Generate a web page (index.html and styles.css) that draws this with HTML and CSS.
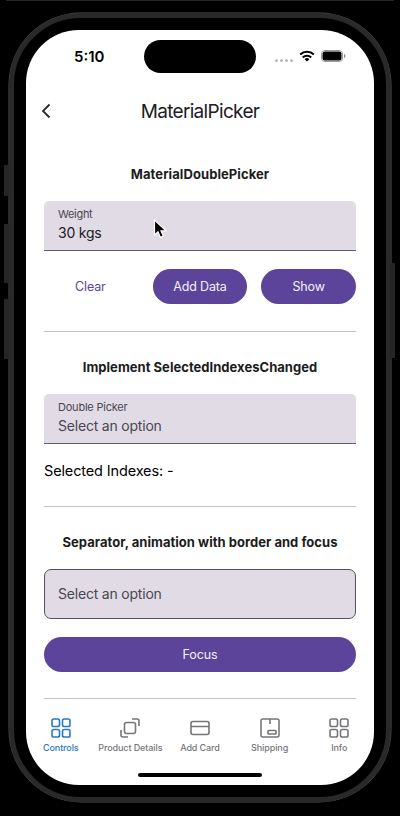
FILE: index.html
```html
<!DOCTYPE html>
<html lang="en">
<head>
<meta charset="utf-8">
<title>MaterialPicker</title>
<link rel="stylesheet" href="styles.css">
</head>
<body>
<div class="phone">
  <span class="side side-action"></span>
  <span class="side side-up"></span>
  <span class="side side-down"></span>
  <span class="side side-power"></span>
  <div class="screen">
    <header class="status">
      <span class="time">5:10</span>
      <span class="island"></span>
      <span class="indicators">
        <span class="signal"><i></i><i></i><i></i><i></i></span>
        <svg class="wifi" width="16" height="12" viewBox="0 0 16 12" fill="none" stroke="#000" stroke-width="2.1"><path d="M1.2 4.500a9.700 9.700 0 0 1 13.600 0M3.800 7.400a6 6 0 0 1 8.400 0"/><path d="M8 11.600 5.600 9.200a3.500 3.500 0 0 1 4.800 0z" fill="#000" stroke="none"/></svg>
        <svg class="battery" width="25" height="12" viewBox="0 0 25 12"><rect x=".5" y=".5" width="21" height="11" rx="3.5" fill="none" stroke="#999"/><rect x="1.500" y="1.500" width="19" height="9" rx="2.500" fill="#000"/><path d="M23 4v4q1.500-.7 1.500-2T23 4" fill="#888"/></svg>
      </span>
    </header>
    <nav class="navbar">
      <svg class="back" width="10" height="16" viewBox="0 0 10 16" fill="none" stroke="#29292e" stroke-width="1.8"><path d="M8.500 1.500 2 8l6.500 6.500"/></svg>
      <h1 class="title">MaterialPicker</h1>
    </nav>
    <main class="content">
      <h2 class="heading h-double">MaterialDoublePicker</h2>
      <div class="field">
        <span class="label l-weight">Weight</span>
        <span class="value">30 kgs</span>
        <svg class="cursor" width="14" height="20" viewBox="0 0 14 20"><path d="M1.500 1v15l3.500-3.200 2.400 5.600 2.900-1.300-2.300-5.300H13z" fill="#000" stroke="#fff" stroke-width="1.200"/></svg>
      </div>
      <div class="actions">
        <button class="btn btn-text">Clear</button>
        <button class="btn">Add Data</button>
        <button class="btn">Show</button>
      </div>
      <hr class="rule">
      <h2 class="heading h-implement">Implement SelectedIndexesChanged</h2>
      <div class="field">
        <span class="label">Double Picker</span>
        <span class="value placeholder">Select an option</span>
      </div>
      <p class="indexes">Selected Indexes: -</p>
      <hr class="rule">
      <h2 class="heading h-separator">Separator, animation with border and focus</h2>
      <div class="field outlined">
        <span class="value placeholder">Select an option</span>
      </div>
      <button class="btn btn-wide">Focus</button>
      <hr class="rule rule-last">
    </main>
    <footer class="tabs">
      <div class="tab active">
        <svg viewBox="0 0 22 22"><rect x="2" y="2" width="7.500" height="7.500" rx="1.800"/><rect x="12.500" y="2" width="7.500" height="7.500" rx="1.800"/><rect x="2" y="12.500" width="7.500" height="7.500" rx="1.800"/><rect x="12.500" y="12.500" width="7.500" height="7.500" rx="1.800"/></svg>
        <span>Controls</span>
      </div>
      <div class="tab">
        <svg viewBox="0 0 22 22"><rect x="5.500" y="5.500" width="11" height="11" rx="2"/><path d="M13 2h5q2 0 2 2v5M2 13v5q0 2 2 2h5"/></svg>
        <span>Product Details</span>
      </div>
      <div class="tab">
        <svg viewBox="0 0 22 22"><rect x="2" y="4.500" width="18" height="13" rx="2"/><path d="M2 9.500h18"/></svg>
        <span>Add Card</span>
      </div>
      <div class="tab">
        <svg viewBox="0 0 22 22"><rect x="2" y="2" width="18" height="18" rx="2"/><path d="M11 2v5"/><rect x="9" y="13.500" width="8" height="3.500" rx=".5"/></svg>
        <span>Shipping</span>
      </div>
      <div class="tab">
        <svg viewBox="0 0 22 22"><rect x="2" y="2" width="7.500" height="7.500" rx="1.800"/><rect x="12.500" y="2" width="7.500" height="7.500" rx="1.800"/><rect x="2" y="12.500" width="7.500" height="7.500" rx="1.800"/><rect x="12.500" y="12.500" width="7.500" height="7.500" rx="1.800"/></svg>
        <span>Info</span>
      </div>
    </footer>
    <div class="home"></div>
  </div>
</div>
</body>
</html>
```
FILE: styles.css
```css
* { box-sizing: border-box; }
body {
  margin: 0;
  height: 816px;
  padding: 13px 9px 0;
  background: #000 linear-gradient(#252525, #252525) 6px 0 / 388px 1px no-repeat;
  font-family: Inter, "Liberation Sans", sans-serif;
  overflow: hidden;
}
h1, h2, p { margin: 0; }
.phone {
  position: relative;
  width: 382px;
  height: 789px;
  padding: 12px;
  border: 5px solid #292929;
  border-radius: 72px;
  background: #000;
  box-shadow: inset 0 0 0 1px #000, 0 0 0 .5px #505050;
}
.side { position: absolute; width: 5px; background: #252525; }
.side-action { left: -10px; top: 147px; height: 31px; }
.side-up { left: -10px; top: 206px; height: 59px; }
.side-down { left: -10px; top: 281px; height: 60px; }
.side-power { right: -9px; top: 245px; height: 95px; }
.screen {
  display: flex;
  flex-direction: column;
  width: 348px;
  height: 755px;
  background: #fff;
  border-radius: 53px;
  overflow: hidden;
}
.status {
  display: grid;
  grid-template-columns: 118px 112px 118px;
  align-items: center;
  height: 53px;
}
.time { padding-left: 48px; font-size: 15px; font-weight: 600; }
.island { height: 33px; border-radius: 17px; background: #000; }
.indicators { display: flex; align-items: center; padding-left: 19px; margin-top: -2px; }
.signal { display: flex; gap: 2px; margin: 9px 6px 0 0; }
.signal i { width: 3px; height: 3px; border-radius: 50%; background: #bbb; }
.battery { margin-left: 6px; }
.navbar {
  display: grid;
  grid-template-columns: 48px 1fr 48px;
  align-items: center;
  height: 57px;
}
.back { margin: -1px 0 0 15px; }
.title { font-size: 19px; font-weight: 400; color: #202024; text-align: center; white-space: nowrap; letter-spacing: -.68px; }
.content { display: flex; flex-direction: column; height: 560px; padding: 23px 18px 0; }
.content > * { flex: none; }
.heading { height: 22px; margin-bottom: 16px; font-size: 13px; line-height: 22px; font-weight: 700; color: #1c1b20; text-align: center; white-space: nowrap; }
.h-double { letter-spacing: .08px; }
.h-implement, .h-separator { letter-spacing: .03px; }
.field {
  position: relative;
  display: flex;
  flex-direction: column;
  height: 50px;
  padding: 6px 14px;
  background: #e0dbe5;
  border-bottom: 1px solid #625c68;
  border-radius: 5px 5px 0 0;
}
.outlined { justify-content: center; border: 1px solid #55505c; border-radius: 7px; padding: 0 13px; }
.label { font-size: 11px; line-height: 15px; color: #4b4752; letter-spacing: -.22px; }
.l-weight { letter-spacing: -.3px; }
.value { font-size: 14px; line-height: 22px; color: #202024; letter-spacing: -.2px; }
.placeholder { color: #4b4752; }
.cursor { position: absolute; left: 109px; top: 18px; }
.actions { display: grid; grid-template-columns: repeat(3, 1fr); gap: 14px; margin-top: 18px; }
.btn {
  height: 35px;
  padding: 0;
  border: 0;
  border-radius: 18px;
  background: #5b4499;
  color: #f5f0ff;
  font: 400 12.5px Inter, "Liberation Sans", sans-serif;
  letter-spacing: -.15px;
}
.btn-text { background: none; color: #5b4499; padding-right: 2px; }
.btn-wide { margin-top: 18px; }
.rule { width: 100%; height: 1px; margin: 27px 0 24px; border: 0; background: #c5c2ca; }
.rule-last { margin: 26px 0 0; }
.indexes { height: 20px; margin-top: 17px; font-size: 14.500px; line-height: 20px; color: #000; letter-spacing: -.14px; }
.indexes + .rule { margin-top: 25px; }
.tabs { display: grid; grid-template-columns: repeat(5, 1fr); height: 60px; padding-top: 17px; }
.tab { display: flex; flex-direction: column; align-items: center; color: #76767a; font-size: 9px; line-height: 12px; white-space: nowrap; font-weight: 500; letter-spacing: -.1px; }
.tab svg { width: 22px; height: 22px; margin-bottom: 3px; fill: none; stroke: currentColor; stroke-width: 1.600; }
.active { color: #2877c9; }
.home { width: 124px; height: 4px; margin: 13px auto 0; border-radius: 2px; background: #000; }
```
